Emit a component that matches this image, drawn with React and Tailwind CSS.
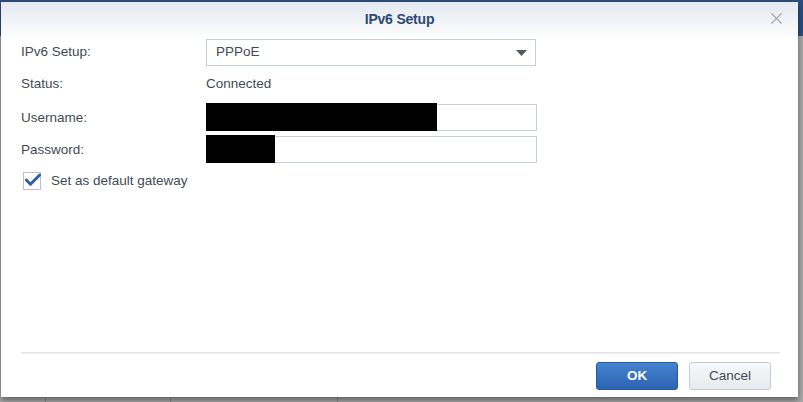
import { Check, X } from "lucide-react";

const font = { fontFamily: '"Liberation Sans", Arial, sans-serif' };

function Row({ label, children }) {
  return (
    <div className="flex items-center">
      <div className="w-[185px] text-[13.5px] text-[#414b56]">{label}</div>
      {children}
    </div>
  );
}

function Field({ redact }) {
  return (
    <div className="relative h-[27px] w-[331px] border border-[#c7cfd9] bg-white">
      <div className="absolute -left-px -top-[2px] h-[28px] bg-black" style={{ width: redact }} />
    </div>
  );
}

export default function App() {
  return (
    <div className="relative h-[402px] w-[803px] overflow-hidden bg-[#a9a9a9]" style={font}>
      {/* page behind the dialog */}
      <div className="absolute inset-x-0 top-0 h-[36px] bg-[#2d4d7c]" />
      <div className="absolute bottom-0 left-[45px] h-[10px] w-px bg-[#8a8a8a]" />
      <div className="absolute bottom-0 left-[170px] h-[10px] w-px bg-[#8a8a8a]" />
      <div className="absolute bottom-0 left-[337px] h-[10px] w-px bg-[#8a8a8a]" />

      <div className="absolute left-px top-[2px] flex h-[395px] w-[797px] flex-col bg-white shadow-[0_3px_6px_rgba(0,0,0,0.45)]">
        {/* header */}
        <div className="relative flex h-[34px] shrink-0 items-center justify-center bg-gradient-to-b from-[#e3e9f0] to-[#fbfcfd]">
          <span className="text-[14px] font-bold tracking-[-0.2px] text-[#2b4a74]">IPv6 Setup</span>
          <X className="absolute right-[12px] top-[7px] h-[19px] w-[19px] text-[#a4a8ad]" strokeWidth={1.5} />
        </div>

        {/* form */}
        <div className="flex flex-col pl-[20px] pt-[3px]">
          <Row label="IPv6 Setup:">
            <div className="flex h-[27px] w-[330px] items-center justify-between border border-[#c7cfd9] pl-[9px] pr-[8px] text-[13.5px] text-[#414b56]">
              <span>PPPoE</span>
              <svg width="11" height="6" viewBox="0 0 11 6">
                <path d="M0 0h11L5.5 6z" fill="#535a63" />
              </svg>
            </div>
          </Row>
          <div className="mt-[8px]">
            <Row label="Status:">
              <span className="text-[13.5px] text-[#414b56]">Connected</span>
            </Row>
          </div>
          <div className="mt-[10px]">
            <Row label="Username:">
              <Field redact={231} />
            </Row>
          </div>
          <div className="mt-[5px]">
            <Row label="Password:">
              <Field redact={69} />
            </Row>
          </div>
          <div className="mt-[8px] flex items-center pl-[2px]">
            <div className="relative h-[18px] w-[18px] border border-[#b8c2ce] bg-white">
              <Check className="absolute -left-px -top-[3px] h-[20px] w-[20px] text-[#2e5f9e]" strokeWidth={3.5} />
            </div>
            <span className="ml-[10px] text-[13.5px] text-[#414b56]">Set as default gateway</span>
          </div>
        </div>

        {/* footer */}
        <div className="mt-auto px-[20px] pb-[7px]">
          <div className="h-[2px] w-[759px] bg-gradient-to-b from-[#e0e0e0] to-[#f2f2f2]" />
          <div className="mt-[8px] flex justify-end gap-[11px] pr-[7px]">
            <button className="h-[28px] w-[82px] rounded-[3px] border border-[#2857a0] bg-gradient-to-b from-[#4683cf] to-[#2c63b2] text-[13.5px] font-bold text-white">
              OK
            </button>
            <button className="h-[28px] w-[82px] rounded-[3px] border border-[#c3ccd6] bg-gradient-to-b from-[#f6f8fa] to-[#e7ebef] text-[13.5px] text-[#414b56]">
              Cancel
            </button>
          </div>
        </div>
      </div>
    </div>
  );
}
